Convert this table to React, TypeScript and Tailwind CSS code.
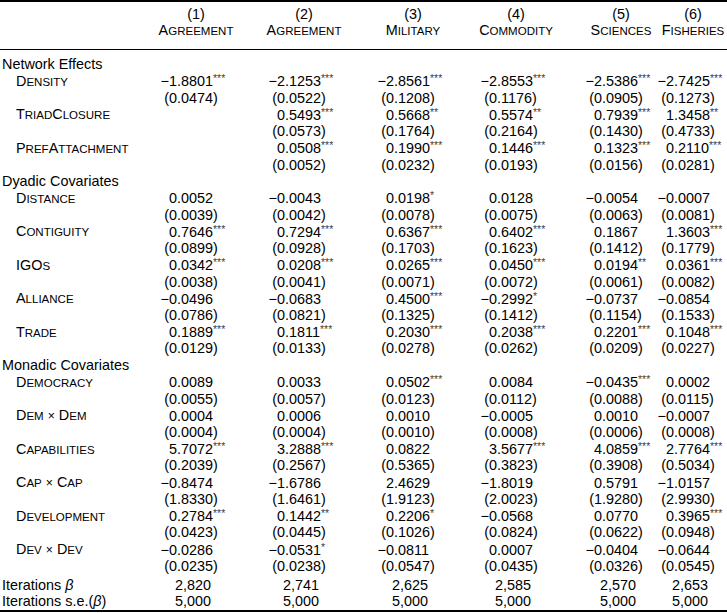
import React from "react";

type Cell = [string, string, string] | null; // coef, stars, se

const SC = ({ t }: { t: string }) => {
  const parts: React.ReactNode[] = [];
  let i = 0;
  let key = 0;
  while (i < t.length) {
    const ch = t[i];
    const isLower = ch >= "a" && ch <= "z";
    let j = i;
    while (j < t.length && (t[j] >= "a" && t[j] <= "z") === isLower) j++;
    const seg = t.slice(i, j);
    if (isLower) {
      parts.push(
        <span key={key++} className="text-[0.8em]">
          {seg.toUpperCase()}
        </span>
      );
    } else {
      parts.push(<span key={key++}>{seg}</span>);
    }
    i = j;
  }
  return <>{parts}</>;
};

const Num = ({ v, stars }: { v: string; stars?: string }) => {
  const i = v.indexOf(".");
  const left = v.slice(0, i);
  const right = v.slice(i);
  return (
    <div className="flex w-[76px] whitespace-nowrap">
      <span className="w-[19px] text-right">{left}</span>
      <span>
        {right}
        {stars && (
          <span className="relative -top-[4px] text-[10.5px] leading-none text-[#444]">{stars}</span>
        )}
      </span>
    </div>
  );
};

const grid = "grid grid-cols-[158px_108px_109px_103px_105px_72px_72px] h-[16.72px] leading-[16.72px] items-center";

const sections: { title: string; rows: { name: string; cells: Cell[] }[] }[] = [
  {
    title: "Network Effects",
    rows: [
      {
        name: "Density",
        cells: [
          ["−1.8801", "***", "(0.0474)"],
          ["−2.1253", "***", "(0.0522)"],
          ["−2.8561", "***", "(0.1208)"],
          ["−2.8553", "***", "(0.1176)"],
          ["−2.5386", "***", "(0.0905)"],
          ["−2.7425", "***", "(0.1273)"],
        ],
      },
      {
        name: "TriadClosure",
        cells: [
          null,
          ["0.5493", "***", "(0.0573)"],
          ["0.5668", "**", "(0.1764)"],
          ["0.5574", "**", "(0.2164)"],
          ["0.7939", "***", "(0.1430)"],
          ["1.3458", "**", "(0.4733)"],
        ],
      },
      {
        name: "PrefAttachment",
        cells: [
          null,
          ["0.0508", "***", "(0.0052)"],
          ["0.1990", "***", "(0.0232)"],
          ["0.1446", "***", "(0.0193)"],
          ["0.1323", "***", "(0.0156)"],
          ["0.2110", "***", "(0.0281)"],
        ],
      },
    ],
  },
  {
    title: "Dyadic Covariates",
    rows: [
      {
        name: "Distance",
        cells: [
          ["0.0052", "", "(0.0039)"],
          ["−0.0043", "", "(0.0042)"],
          ["0.0198", "*", "(0.0078)"],
          ["0.0128", "", "(0.0075)"],
          ["−0.0054", "", "(0.0063)"],
          ["−0.0007", "", "(0.0081)"],
        ],
      },
      {
        name: "Contiguity",
        cells: [
          ["0.7646", "***", "(0.0899)"],
          ["0.7294", "***", "(0.0928)"],
          ["0.6367", "***", "(0.1703)"],
          ["0.6402", "***", "(0.1623)"],
          ["0.1867", "", "(0.1412)"],
          ["1.3603", "***", "(0.1779)"],
        ],
      },
      {
        name: "IGOs",
        cells: [
          ["0.0342", "***", "(0.0038)"],
          ["0.0208", "***", "(0.0041)"],
          ["0.0265", "***", "(0.0071)"],
          ["0.0450", "***", "(0.0072)"],
          ["0.0194", "**", "(0.0061)"],
          ["0.0361", "***", "(0.0082)"],
        ],
      },
      {
        name: "Alliance",
        cells: [
          ["−0.0496", "", "(0.0786)"],
          ["−0.0683", "", "(0.0821)"],
          ["0.4500", "***", "(0.1325)"],
          ["−0.2992", "*", "(0.1412)"],
          ["−0.0737", "", "(0.1154)"],
          ["−0.0854", "", "(0.1533)"],
        ],
      },
      {
        name: "Trade",
        cells: [
          ["0.1889", "***", "(0.0129)"],
          ["0.1811", "***", "(0.0133)"],
          ["0.2030", "***", "(0.0278)"],
          ["0.2038", "***", "(0.0262)"],
          ["0.2201", "***", "(0.0209)"],
          ["0.1048", "***", "(0.0227)"],
        ],
      },
    ],
  },
  {
    title: "Monadic Covariates",
    rows: [
      {
        name: "Democracy",
        cells: [
          ["0.0089", "", "(0.0055)"],
          ["0.0033", "", "(0.0057)"],
          ["0.0502", "***", "(0.0123)"],
          ["0.0084", "", "(0.0112)"],
          ["−0.0435", "***", "(0.0088)"],
          ["0.0002", "", "(0.0115)"],
        ],
      },
      {
        name: "Dem × Dem",
        cells: [
          ["0.0004", "", "(0.0004)"],
          ["0.0006", "", "(0.0004)"],
          ["0.0010", "", "(0.0010)"],
          ["−0.0005", "", "(0.0008)"],
          ["0.0010", "", "(0.0006)"],
          ["−0.0007", "", "(0.0008)"],
        ],
      },
      {
        name: "Capabilities",
        cells: [
          ["5.7072", "***", "(0.2039)"],
          ["3.2888", "***", "(0.2567)"],
          ["0.0822", "", "(0.5365)"],
          ["3.5677", "***", "(0.3823)"],
          ["4.0859", "***", "(0.3908)"],
          ["2.7764", "***", "(0.5034)"],
        ],
      },
      {
        name: "Cap × Cap",
        cells: [
          ["−0.8474", "", "(1.8330)"],
          ["−1.6786", "", "(1.6461)"],
          ["2.4629", "", "(1.9123)"],
          ["−1.8019", "", "(2.0023)"],
          ["0.5791", "", "(1.9280)"],
          ["−1.0157", "", "(2.9930)"],
        ],
      },
      {
        name: "Development",
        cells: [
          ["0.2784", "***", "(0.0423)"],
          ["0.1442", "**", "(0.0445)"],
          ["0.2206", "*", "(0.1026)"],
          ["−0.0568", "", "(0.0824)"],
          ["0.0770", "", "(0.0622)"],
          ["0.3965", "***", "(0.0948)"],
        ],
      },
      {
        name: "Dev × Dev",
        cells: [
          ["−0.0286", "", "(0.0235)"],
          ["−0.0531", "*", "(0.0238)"],
          ["−0.0811", "", "(0.0547)"],
          ["0.0007", "", "(0.0435)"],
          ["−0.0404", "", "(0.0326)"],
          ["−0.0644", "", "(0.0545)"],
        ],
      },
    ],
  },
];

const headers: [string, string][] = [
  ["(1)", "Agreement"],
  ["(2)", "Agreement"],
  ["(3)", "Military"],
  ["(4)", "Commodity"],
  ["(5)", "Sciences"],
  ["(6)", "Fisheries"],
];

const NameLabel = ({ name }: { name: string }) => {
  const parts = name.split(" × ");
  return (
    <div className="pl-[16px] whitespace-nowrap">
      {parts.map((p, i) => (
        <React.Fragment key={i}>
          {i > 0 && <span className="px-[4px] text-[0.85em]">×</span>}
          <SC t={p} />
        </React.Fragment>
      ))}
    </div>
  );
};

export default function App() {
  return (
    <div
      className="w-[727px] h-[613px] bg-white text-black text-[14.4px] overflow-hidden"
      style={{ fontFamily: '"Liberation Sans", Arial, sans-serif' }}
    >
      <div className="border-t-2 border-black" />
      <div className="pt-[3.5px] pb-[10.5px] border-b-[1.2px] border-black">
        <div className={grid}>
          <div />
          {headers.map((h, i) => (
            <div key={i} className="w-[76px] text-center">
              {h[0]}
            </div>
          ))}
        </div>
        <div className={grid}>
          <div />
          {headers.map((h, i) => (
            <div key={i} className="w-[76px] text-center whitespace-nowrap">
              <SC t={h[1]} />
            </div>
          ))}
        </div>
      </div>
      <div className="pt-[5.8px]">
        {sections.map((s) => (
          <React.Fragment key={s.title}>
            <div className={grid}>
              <div className="pl-[2px] whitespace-nowrap">{s.title}</div>
            </div>
            {s.rows.map((r) => (
              <React.Fragment key={r.name}>
                <div className={grid}>
                  <NameLabel name={r.name} />
                  {r.cells.map((c, i) => (
                    <div key={i}>{c && <Num v={c[0]} stars={c[1]} />}</div>
                  ))}
                </div>
                <div className={grid}>
                  <div />
                  {r.cells.map((c, i) => (
                    <div key={i}>{c && <Num v={c[2]} />}</div>
                  ))}
                </div>
              </React.Fragment>
            ))}
          </React.Fragment>
        ))}
      </div>
      <div className="pt-[2px]">
        <div className={grid}>
          <div className="pl-[2px] whitespace-nowrap">
            Iterations <span className="italic">β</span>
          </div>
          {["2,820", "2,741", "2,625", "2,585", "2,570", "2,653"].map((v, i) => (
            <div key={i} className="w-[70px] text-center">
              {v}
            </div>
          ))}
        </div>
        <div className={grid}>
          <div className="pl-[2px] whitespace-nowrap">
            Iterations s.e.(<span className="italic">β</span>)
          </div>
          {["5,000", "5,000", "5,000", "5,000", "5,000", "5,000"].map((v, i) => (
            <div key={i} className="w-[70px] text-center">
              {v}
            </div>
          ))}
        </div>
      </div>
      <div className="border-t-2 border-black" />
    </div>
  );
}
